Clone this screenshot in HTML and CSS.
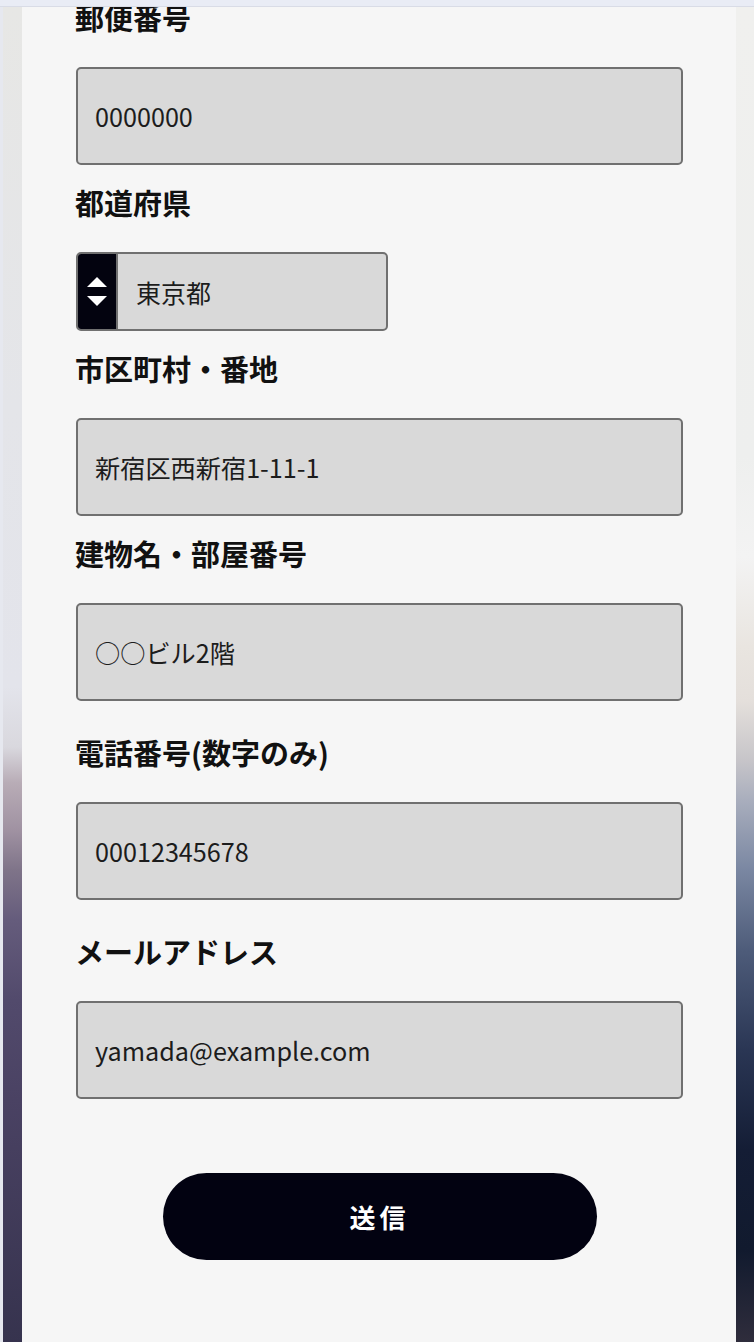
FILE: index.html
```html
<!DOCTYPE html>
<html lang="ja">
<head>
<meta charset="utf-8">
<title>お届け先情報</title>
<link rel="stylesheet" href="styles.css">
</head>
<body>
<div class="topbar"></div>
<div class="frame">
  <div class="edge-thin"></div>
  <div class="edge-left"></div>
  <main class="panel">
    <form class="form">
      <div class="field field--first">
        <label class="label">郵便番号</label>
        <input class="input" type="text" value="0000000" readonly>
      </div>
      <div class="field">
        <label class="label">都道府県</label>
        <div class="select">
          <span class="select-icon">
            <svg width="20" height="30" viewBox="0 0 20 30" aria-hidden="true">
              <polygon points="10,0 20,10 0,10" fill="#ffffff"/>
              <polygon points="0,19 20,19 10,29" fill="#ffffff"/>
            </svg>
          </span>
          <span class="select-value">東京都</span>
        </div>
      </div>
      <div class="field">
        <label class="label">市区町村・番地</label>
        <input class="input" type="text" value="新宿区西新宿1-11-1" readonly>
      </div>
      <div class="field">
        <label class="label">建物名・部屋番号</label>
        <input class="input" type="text" value="○○ビル2階" readonly>
      </div>
      <div class="field field--wide">
        <label class="label">電話番号(数字のみ)</label>
        <input class="input" type="text" value="00012345678" readonly>
      </div>
      <div class="field field--wide">
        <label class="label">メールアドレス</label>
        <input class="input" type="text" value="yamada@example.com" readonly>
      </div>
      <div class="actions">
        <button class="submit" type="button">送信</button>
      </div>
    </form>
  </main>
  <div class="edge-right"></div>
</div>
</body>
</html>
```
FILE: styles.css
```css
html, body {
  margin: 0;
  padding: 0;
  height: 100%;
  overflow: hidden;
}
body {
  background: #e8eaf1;
  font-family: "Noto Sans CJK JP", "Noto Sans", sans-serif;
  color: #151515;
}
.topbar {
  height: 6px;
  background: #e9ecf5;
  border-bottom: 1px solid #d9dce6;
}
.frame {
  display: flex;
  height: 1335px;
}
.edge-thin {
  width: 3px;
  background: #e6e8ef;
}
.edge-left {
  width: 19px;
  background: linear-gradient(to bottom,
    #e7e7e5 0px,
    #e4e5e9 400px,
    #e3e4eb 680px,
    #d9d8de 740px,
    #b8acb6 776px,
    #a092a2 823px,
    #7f7489 863px,
    #655c7c 913px,
    #524a6c 993px,
    #4a4263 1093px,
    #36334e 1335px);
}
.panel {
  width: 714px;
  background: #f6f6f6;
  overflow: hidden;
  padding: 0 53px 0 54px;
  box-sizing: border-box;
}
.edge-right {
  width: 18px;
  background: linear-gradient(to bottom,
    #f0f0ee 0px,
    #eeefee 450px,
    #f3f3f3 550px,
    #e9e5e0 640px,
    #e4dfdb 695px,
    #c7c5c9 753px,
    #a9aebd 793px,
    #7a87a2 863px,
    #4e5c7a 943px,
    #2a3654 1043px,
    #141d35 1143px,
    #111a2e 1243px,
    #2f2d3c 1335px);
}
.form {
  display: flex;
  flex-direction: column;
}
.field {
  display: flex;
  flex-direction: column;
  margin-top: 15px;
}
.field--first {
  margin-top: -12px;
}
.field--wide {
  margin-top: 29px;
}
.label {
  display: block;
  font-size: 29px;
  font-weight: 700;
  line-height: 44px;
  height: 44px;
  margin-bottom: 28px;
  margin-left: -1px;
  color: #111111;
  white-space: nowrap;
}
.input {
  display: block;
  box-sizing: border-box;
  width: 607px;
  height: 98px;
  margin: 0;
  padding: 0 17px;
  border: 2px solid #707070;
  border-radius: 5px;
  background: #d9d9d9;
  font-family: "Noto Sans CJK JP", "Noto Sans", sans-serif;
  font-size: 25.2px;
  color: #1c1c1c;
  outline: none;
}
.select {
  display: flex;
  align-items: stretch;
  box-sizing: border-box;
  width: 312px;
  height: 79px;
  border: 2px solid #707070;
  border-radius: 5px;
  background: #d9d9d9;
  overflow: hidden;
}
.select-icon {
  width: 38px;
  background: #03030f;
  border-right: 2px solid #707070;
  display: flex;
  align-items: center;
  justify-content: center;
}
.select-value {
  display: flex;
  align-items: center;
  padding-left: 18px;
  font-size: 25px;
  color: #1c1c1c;
}
.actions {
  display: flex;
  justify-content: center;
  margin-top: 74px;
}
.submit {
  width: 434px;
  height: 87px;
  border: none;
  border-radius: 44px;
  background: #020211;
  color: #ffffff;
  font-family: "Noto Sans CJK JP", "Noto Sans", sans-serif;
  font-size: 26px;
  font-weight: 700;
  letter-spacing: 4px;
  padding: 0;
  cursor: pointer;
}
```
